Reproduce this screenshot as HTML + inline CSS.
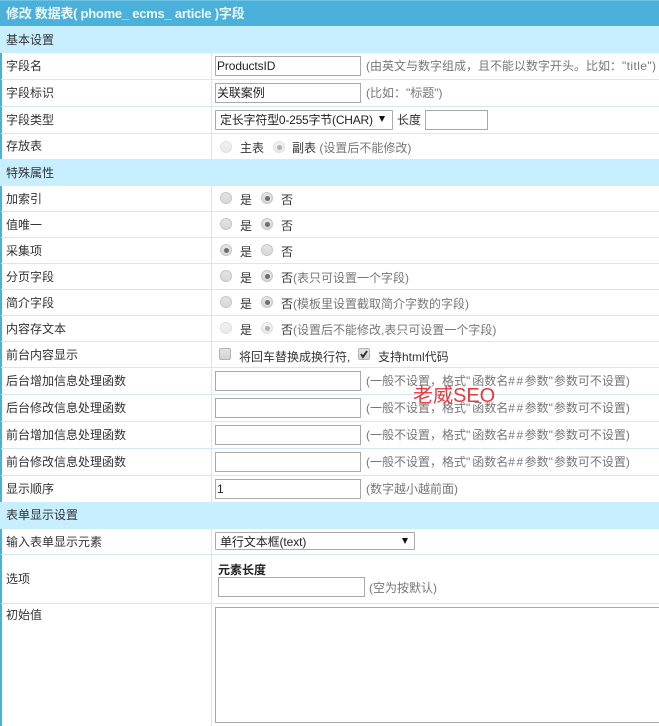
<!DOCTYPE html>
<html lang="zh-CN">
<head>
<meta charset="utf-8">
<title>修改字段</title>
<style>
html,body{margin:0;padding:0;background:#fff;}
#p{position:relative;width:659px;height:726px;overflow:hidden;background:#fff;font:12px/16px "Liberation Sans","Noto Sans CJK SC",sans-serif;color:#333;}
#p div{position:absolute;box-sizing:border-box;}
.t{white-space:nowrap;height:16px;}
.n{color:#777;}
.q{letter-spacing:2px;}
.h{letter-spacing:1.5px;}
.sec{left:0;width:659px;height:27px;background:#c7efff;}
.ln{left:1px;width:658px;height:1px;background:#cfeaf5;}
.i{width:146px;height:20px;border:1px solid #a9a9a9;background:#fff;padding:1px;color:#222;line-height:17px;letter-spacing:-.1px;}
.r{width:12px;height:12px;border-radius:50%;border:1px solid #c6c6c6;background:linear-gradient(#e4e4e4,#d8d8d8);}
.r.c:after{content:"";position:absolute;left:2.5px;top:2.5px;width:5px;height:5px;border-radius:50%;background:#6e6e6e;}
.r.d{border-color:#e0e0e0;background:linear-gradient(#f2f2f2,#e9e9e9);}
.r.d.c:after{background:#b0b0b0;}
.cb{width:12px;height:12px;border:1px solid #b4b4b4;border-radius:2px;background:linear-gradient(#e4e4e4,#d2d2d2);}
.arr{width:0;height:0;border-left:3px solid transparent;border-right:3px solid transparent;border-top:6px solid #111;}
</style>
</head>
<body>
<div id="p">
<div style="left:0;top:0;width:659px;height:26px;background:#4cb1da;border-top:1px solid #6cc3e4;"></div>
<div style="left:0;top:26px;width:2px;height:700px;background:#4cb1da;"></div>
<div class="t" style="left:6px;top:6px;color:#eaf7fc;font-weight:bold;font-size:13px;letter-spacing:-.25px;">修改 数据表( phome_ ecms_ article )字段</div>

<div class="sec" style="top:26px;"></div>
<div class="sec" style="top:159px;"></div>
<div class="sec" style="top:502px;"></div>

<div style="left:211px;top:53px;width:1px;height:106px;background:#cfeaf5;"></div>
<div style="left:211px;top:186px;width:1px;height:316px;background:#cfeaf5;"></div>
<div style="left:211px;top:529px;width:1px;height:197px;background:#cfeaf5;"></div>

<div class="ln" style="top:79px;"></div>
<div class="ln" style="top:106px;"></div>
<div class="ln" style="top:133px;"></div>
<div class="ln" style="top:211px;"></div>
<div class="ln" style="top:237px;"></div>
<div class="ln" style="top:263px;"></div>
<div class="ln" style="top:289px;"></div>
<div class="ln" style="top:315px;"></div>
<div class="ln" style="top:341px;"></div>
<div class="ln" style="top:367px;"></div>
<div class="ln" style="top:394px;"></div>
<div class="ln" style="top:421px;"></div>
<div class="ln" style="top:448px;"></div>
<div class="ln" style="top:475px;"></div>
<div class="ln" style="top:554px;"></div>
<div class="ln" style="top:603px;"></div>

<div class="t" style="left:6px;top:32px;">基本设置</div>
<div class="t" style="left:6px;top:58px;">字段名</div>
<div class="t" style="left:6px;top:85px;">字段标识</div>
<div class="t" style="left:6px;top:112px;">字段类型</div>
<div class="t" style="left:6px;top:138px;">存放表</div>
<div class="t" style="left:6px;top:165px;">特殊属性</div>
<div class="t" style="left:6px;top:191px;">加索引</div>
<div class="t" style="left:6px;top:217px;">值唯一</div>
<div class="t" style="left:6px;top:243px;">采集项</div>
<div class="t" style="left:6px;top:269px;">分页字段</div>
<div class="t" style="left:6px;top:295px;">简介字段</div>
<div class="t" style="left:6px;top:321px;">内容存文本</div>
<div class="t" style="left:6px;top:347px;">前台内容显示</div>
<div class="t" style="left:6px;top:373px;">后台增加信息处理函数</div>
<div class="t" style="left:6px;top:400px;">后台修改信息处理函数</div>
<div class="t" style="left:6px;top:427px;">前台增加信息处理函数</div>
<div class="t" style="left:6px;top:454px;">前台修改信息处理函数</div>
<div class="t" style="left:6px;top:481px;">显示顺序</div>
<div class="t" style="left:6px;top:507px;">表单显示设置</div>
<div class="t" style="left:6px;top:534px;">输入表单显示元素</div>
<div class="t" style="left:6px;top:571px;">选项</div>
<div class="t" style="left:6px;top:607px;">初始值</div>

<div class="i" style="left:215px;top:56px;">ProductsID</div>
<div class="t n" style="left:366px;top:58px;">(由英文与数字组成，且不能以数字开头。比如：<span style="letter-spacing:.4px;">"title")</span></div>
<div class="i" style="left:215px;top:83px;">关联案例</div>
<div class="t n" style="left:366px;top:85px;">(比如："标题")</div>
<div class="i" style="left:215px;top:110px;width:178px;border-radius:1px;padding-left:4px;letter-spacing:-.22px;">定长字符型0-255字节(CHAR)</div>
<div class="arr" style="left:379px;top:116px;"></div>
<div class="t" style="left:397px;top:112px;">长度</div>
<div class="i" style="left:425px;top:110px;width:63px;"></div>

<div class="r d" style="left:220px;top:141px;"></div>
<div class="t" style="left:240px;top:140px;">主表</div>
<div class="r d c" style="left:273px;top:141px;"></div>
<div class="t" style="left:292px;top:140px;">副表 <span class="n">(设置后不能修改)</span></div>

<div class="r" style="left:220px;top:192px;"></div><div class="t" style="left:240px;top:192px;">是</div>
<div class="r c" style="left:261px;top:192px;"></div><div class="t" style="left:281px;top:192px;">否</div>
<div class="r" style="left:220px;top:218px;"></div><div class="t" style="left:240px;top:218px;">是</div>
<div class="r c" style="left:261px;top:218px;"></div><div class="t" style="left:281px;top:218px;">否</div>
<div class="r c" style="left:220px;top:244px;"></div><div class="t" style="left:240px;top:244px;">是</div>
<div class="r" style="left:261px;top:244px;"></div><div class="t" style="left:281px;top:244px;">否</div>
<div class="r" style="left:220px;top:270px;"></div><div class="t" style="left:240px;top:270px;">是</div>
<div class="r c" style="left:261px;top:270px;"></div><div class="t" style="left:281px;top:270px;">否<span class="n">(表只可设置一个字段)</span></div>
<div class="r" style="left:220px;top:296px;"></div><div class="t" style="left:240px;top:296px;">是</div>
<div class="r c" style="left:261px;top:296px;"></div><div class="t" style="left:281px;top:296px;">否<span class="n">(模板里设置截取简介字数的字段)</span></div>
<div class="r d" style="left:220px;top:322px;"></div><div class="t" style="left:240px;top:322px;">是</div>
<div class="r d c" style="left:261px;top:322px;"></div><div class="t" style="left:281px;top:322px;">否<span class="n">(设置后不能修改,表只可设置一个字段)</span></div>

<div class="cb" style="left:219px;top:348px;"></div>
<div class="t" style="left:239px;top:349px;">将回车替换成换行符,</div>
<div class="cb" style="left:358px;top:348px;"></div>
<svg style="position:absolute;left:358px;top:348px;" width="12" height="12" viewBox="0 0 12 12"><path d="M3 6l2 3 4-6" fill="none" stroke="#333" stroke-width="2"/></svg>
<div class="t" style="left:378px;top:349px;">支持html代码</div>

<div class="i" style="left:215px;top:371px;"></div>
<div class="t n" style="left:366px;top:373px;">(一般不设置，格式<span class="q">"</span>函数名<span class="h">##</span>参数"<span style="padding-left:1px;">参数可不设置)</span></div>
<div class="i" style="left:215px;top:398px;"></div>
<div class="t n" style="left:366px;top:400px;">(一般不设置，格式<span class="q">"</span>函数名<span class="h">##</span>参数"<span style="padding-left:1px;">参数可不设置)</span></div>
<div class="i" style="left:215px;top:425px;"></div>
<div class="t n" style="left:366px;top:427px;">(一般不设置，格式<span class="q">"</span>函数名<span class="h">##</span>参数"<span style="padding-left:1px;">参数可不设置)</span></div>
<div class="i" style="left:215px;top:452px;"></div>
<div class="t n" style="left:366px;top:454px;">(一般不设置，格式<span class="q">"</span>函数名<span class="h">##</span>参数"<span style="padding-left:1px;">参数可不设置)</span></div>
<div class="i" style="left:215px;top:479px;">1</div>
<div class="t n" style="left:366px;top:481px;">(数字越小越前面)</div>

<div class="t" style="left:413px;top:385px;height:22px;font-size:20px;line-height:22px;color:#e8383c;">老威SEO</div>

<div class="i" style="left:215px;top:532px;width:200px;height:18px;padding:0 0 0 4px;line-height:18px;border-radius:1px;">单行文本框(text)</div>
<div class="arr" style="left:402px;top:538px;"></div>

<div class="t" style="left:218px;top:562px;font-weight:bold;color:#222;">元素长度</div>
<div class="i" style="left:218px;top:577px;width:147px;"></div>
<div class="t n" style="left:369px;top:580px;">(空为按默认)</div>

<div class="i" style="left:215px;top:607px;width:460px;height:116px;"></div>
</div>
</body>
</html>
